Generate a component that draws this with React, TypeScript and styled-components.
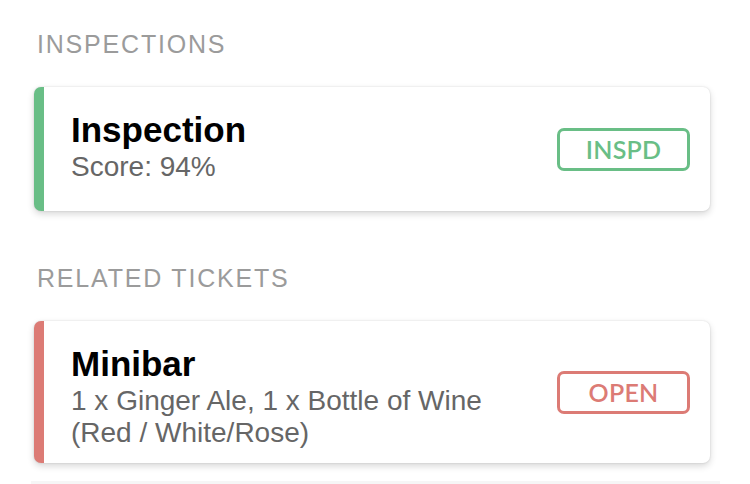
import React from "react"
import styled, { createGlobalStyle } from "styled-components"

const GlobalStyle = createGlobalStyle`
  html, body {
    margin: 0;
    padding: 0;
    background: #ffffff;
  }
  body {
    font-family: "Liberation Sans", Arial, sans-serif;
    -webkit-font-smoothing: antialiased;
  }
`

const Page = styled.div`
  width: 750px;
  height: 484px;
  overflow: hidden;
  box-sizing: border-box;
  padding: 29px 40px 0 34px;
  display: flex;
  flex-direction: column;
`

const Section = styled.section`
  display: flex;
  flex-direction: column;
  & + & {
    margin-top: 52px;
  }
`

const SectionLabel = styled.div`
  font-size: 25px;
  line-height: 30px;
  letter-spacing: 1.8px;
  color: #9b9b9b;
  padding-left: 3px;
  margin-bottom: 28px;
  text-transform: uppercase;
`

const Card = styled.div<{ $accent: string }>`
  display: flex;
  align-items: center;
  gap: 16px;
  min-height: 124px;
  box-sizing: border-box;
  background: #ffffff;
  border-left: 10px solid ${({ $accent }) => $accent};
  border-radius: 7px;
  padding: 0 20px 0 27px;
  box-shadow: 0 0 2px rgba(0, 0, 0, 0.14), 0 3px 7px rgba(0, 0, 0, 0.16);
`

const Body = styled.div`
  flex: 1;
  align-self: flex-start;
  padding: 22px 0 14px;
  min-width: 0;
`

const Title = styled.div`
  font-size: 35px;
  line-height: 42px;
  font-weight: 700;
  color: #000000;
`

const Detail = styled.div`
  font-size: 28px;
  line-height: 32px;
  color: #666666;
  padding-right: 20px;
`

const Badge = styled.div<{ $color: string }>`
  flex: none;
  width: 133px;
  height: 43px;
  box-sizing: border-box;
  border: 3px solid ${({ $color }) => $color};
  border-radius: 7px;
  color: ${({ $color }) => $color};
  font-family: Lato, "Liberation Sans", sans-serif;
  font-weight: 600;
  font-size: 25px;
  display: flex;
  align-items: center;
  justify-content: center;
  letter-spacing: 0.2px;
`

const Divider = styled.div`
  margin: 18px -10px 0 -3px;
  height: 4px;
  background: #f6f6f6;
`

const GREEN = "#69be86"
const RED = "#dc7b75"

type Item = { title: string; detail: string; status: string; color: string }

const inspections: Item[] = [
  { title: "Inspection", detail: "Score: 94%", status: "INSPD", color: GREEN },
]

const tickets: Item[] = [
  {
    title: "Minibar",
    detail: "1 x Ginger Ale, 1 x Bottle of Wine (Red / White/Rose)",
    status: "OPEN",
    color: RED,
  },
]

const ItemCard = ({ item }: { item: Item }) => (
  <Card $accent={item.color}>
    <Body>
      <Title>{item.title}</Title>
      <Detail>{item.detail}</Detail>
    </Body>
    <Badge $color={item.color}>{item.status}</Badge>
  </Card>
)

const App = () => {
  return (
    <>
      <GlobalStyle />
      <Page>
        <Section>
          <SectionLabel>Inspections</SectionLabel>
          {inspections.map((item) => (
            <ItemCard key={item.title} item={item} />
          ))}
        </Section>
        <Section>
          <SectionLabel>Related Tickets</SectionLabel>
          {tickets.map((item) => (
            <ItemCard key={item.title} item={item} />
          ))}
        </Section>
        <Divider />
      </Page>
    </>
  )
}

export default App
